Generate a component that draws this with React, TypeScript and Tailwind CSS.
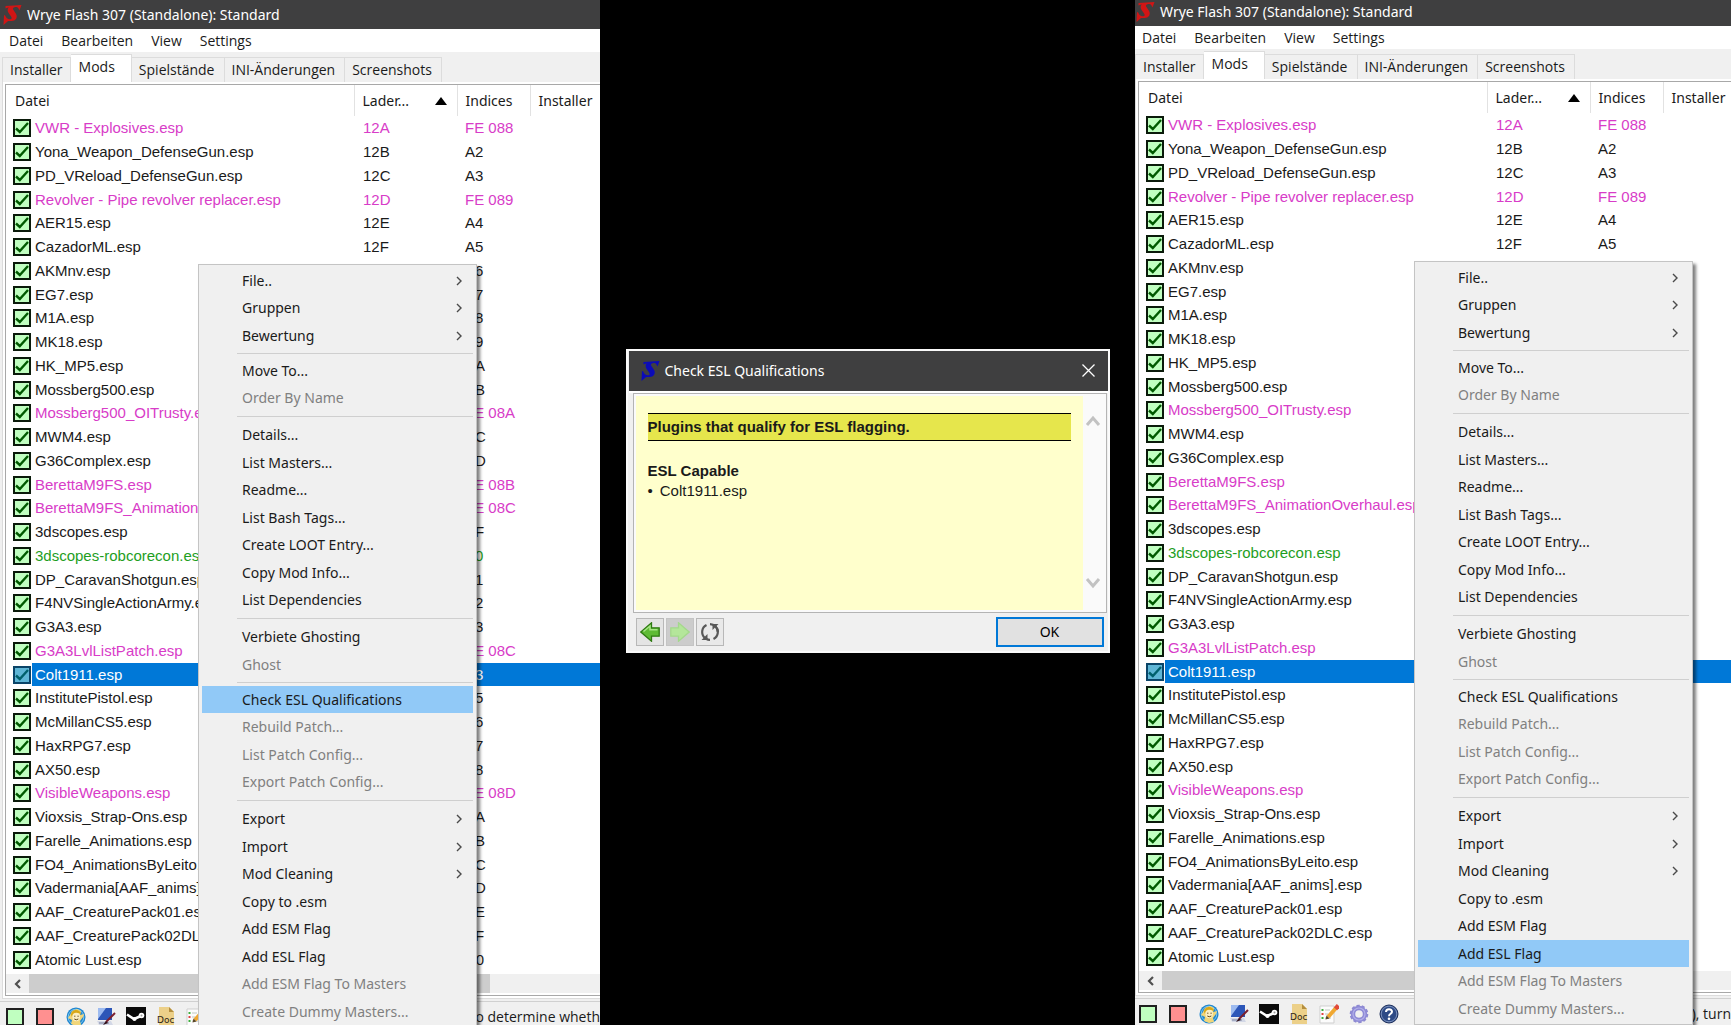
import React, { useState } from 'react';
import clsx from 'clsx';

type Tone = 'esl' | 'merge' | 'normal';

interface Mod {
  name: string;
  order?: string;
  index: string;
  tone?: Tone;
}

const MODS: Mod[] = [
  { name: 'VWR - Explosives.esp', order: '12A', index: 'FE 088', tone: 'esl' },
  { name: 'Yona_Weapon_DefenseGun.esp', order: '12B', index: 'A2' },
  { name: 'PD_VReload_DefenseGun.esp', order: '12C', index: 'A3' },
  { name: 'Revolver - Pipe revolver replacer.esp', order: '12D', index: 'FE 089', tone: 'esl' },
  { name: 'AER15.esp', order: '12E', index: 'A4' },
  { name: 'CazadorML.esp', order: '12F', index: 'A5' },
  { name: 'AKMnv.esp', index: 'A6' },
  { name: 'EG7.esp', index: 'A7' },
  { name: 'M1A.esp', index: 'A8' },
  { name: 'MK18.esp', index: 'A9' },
  { name: 'HK_MP5.esp', index: 'AA' },
  { name: 'Mossberg500.esp', index: 'AB' },
  { name: 'Mossberg500_OITrusty.esp', index: 'FE 08A', tone: 'esl' },
  { name: 'MWM4.esp', index: 'AC' },
  { name: 'G36Complex.esp', index: 'AD' },
  { name: 'BerettaM9FS.esp', index: 'FE 08B', tone: 'esl' },
  { name: 'BerettaM9FS_AnimationOverhaul.esp', index: 'FE 08C', tone: 'esl' },
  { name: '3dscopes.esp', index: 'AF' },
  { name: '3dscopes-robcorecon.esp', index: 'B0', tone: 'merge' },
  { name: 'DP_CaravanShotgun.esp', index: 'B1' },
  { name: 'F4NVSingleActionArmy.esp', index: 'B2' },
  { name: 'G3A3.esp', index: 'B3' },
  { name: 'G3A3LvlListPatch.esp', index: 'FE 08C', tone: 'esl' },
  { name: 'Colt1911.esp', index: 'B3' },
  { name: 'InstitutePistol.esp', index: 'B5' },
  { name: 'McMillanCS5.esp', index: 'B6' },
  { name: 'HaxRPG7.esp', index: 'B7' },
  { name: 'AX50.esp', index: 'B8' },
  { name: 'VisibleWeapons.esp', index: 'FE 08D', tone: 'esl' },
  { name: 'Vioxsis_Strap-Ons.esp', index: 'BA' },
  { name: 'Farelle_Animations.esp', index: 'BB' },
  { name: 'FO4_AnimationsByLeito.esp', index: 'BC' },
  { name: 'Vadermania[AAF_anims].esp', index: 'BD' },
  { name: 'AAF_CreaturePack01.esp', index: 'BE' },
  { name: 'AAF_CreaturePack02DLC.esp', index: 'BF' },
  { name: 'Atomic Lust.esp', index: 'C0' },
];

const SELECTED = 'Colt1911.esp';

interface MenuEntry {
  label: string;
  disabled?: boolean;
  submenu?: boolean;
}

// null is a separator
const MENU: (MenuEntry | null)[] = [
  { label: 'File..', submenu: true },
  { label: 'Gruppen', submenu: true },
  { label: 'Bewertung', submenu: true },
  null,
  { label: 'Move To...' },
  { label: 'Order By Name', disabled: true },
  null,
  { label: 'Details...' },
  { label: 'List Masters...' },
  { label: 'Readme...' },
  { label: 'List Bash Tags...' },
  { label: 'Create LOOT Entry...' },
  { label: 'Copy Mod Info...' },
  { label: 'List Dependencies' },
  null,
  { label: 'Verbiete Ghosting' },
  { label: 'Ghost', disabled: true },
  null,
  { label: 'Check ESL Qualifications' },
  { label: 'Rebuild Patch...', disabled: true },
  { label: 'List Patch Config...', disabled: true },
  { label: 'Export Patch Config...', disabled: true },
  null,
  { label: 'Export', submenu: true },
  { label: 'Import', submenu: true },
  { label: 'Mod Cleaning', submenu: true },
  { label: 'Copy to .esm' },
  { label: 'Add ESM Flag' },
  { label: 'Add ESL Flag' },
  { label: 'Add ESM Flag To Masters', disabled: true },
  { label: 'Create Dummy Masters...', disabled: true },
];

function Logo({ className }: { className?: string }) {
  return (
    <svg viewBox="0 0 19 20" className={clsx('h-5 w-[19px] shrink-0', className)} fill="currentColor" aria-hidden="true">
      <path d="M2.500 1 L18.500 0 L16.500 5.500 L15.500 3.500 C14.500 1.900 13 1.900 11.500 2.200 C9.600 2.600 9.600 4 10.600 5.300 L12.800 8.500 C14.800 11.500 13.600 15 10 15.800 C8 16.300 6 15.800 4.800 16.200 L0.500 20 L1 10 L2.200 10.500 C3 13 5 14.600 7.300 14.300 C8.900 14 9 12.500 7.900 11.200 L5.600 8 C4.300 6.200 4.300 4 5.800 2.300 L2.500 3.600 Z" />
    </svg>
  );
}

function Check({ selected }: { selected: boolean }) {
  return (
    <svg
      viewBox="0 0 18 18"
      className={clsx('pointer-events-none col-start-1 row-start-1 size-[18px]', selected ? 'text-[#00606c]' : 'text-[#005a00]')}
      fill="none"
      stroke="currentColor"
      aria-hidden="true"
    >
      <path d="M3 9.500 L6.800 13 L15 4" strokeWidth="2.400" />
    </svg>
  );
}

function ModRow({ mod }: { mod: Mod }) {
  const [active, setActive] = useState(true);
  const selected = mod.name === SELECTED;
  const color = selected
    ? 'bg-[#0078d7] text-white'
    : mod.tone === 'esl'
      ? 'text-[#d83cc8]'
      : mod.tone === 'merge'
        ? 'text-[#1e9e1e]'
        : 'text-[#1a1a1a]';

  return (
    <tr className="h-6 nth-[4n]:h-[23px]">
      <td className="h-[inherit] p-0">
        <label className="flex h-[inherit] items-center pl-[7px]">
          <span className="grid shrink-0">
            <input
              type="checkbox"
              checked={active}
              onChange={() => setActive(!active)}
              className={clsx(
                'col-start-1 row-start-1 size-[18px] appearance-none border-2',
                selected ? 'border-[#0a4468] bg-[#5fb6d6]' : 'border-[#0a1a0a] bg-[#c0ffc0]',
              )}
            />
            {active && <Check selected={selected} />}
          </span>
          <span className={clsx('ml-px flex h-[inherit] flex-1 items-center pl-[3px] whitespace-nowrap', color)}>{mod.name}</span>
        </label>
      </td>
      <td className={clsx('p-0 pl-[9px]', color)}>{mod.order}</td>
      <td className={clsx('p-0 pl-2', color)}>{mod.index}</td>
      <td className={clsx('p-0', color)} />
    </tr>
  );
}

function ModTable() {
  return (
    <table className="w-full table-fixed border-collapse font-['Liberation_Sans',sans-serif] text-[15px] leading-5">
      <colgroup>
        <col className="w-[348px]" />
        <col className="w-[103px]" />
        <col className="w-[73px]" />
        <col />
      </colgroup>
      <thead className="font-['Noto_Sans',sans-serif] text-sm text-[#1a1a1a]">
        <tr className="h-[31px]">
          <th className="border-r border-[#e2e2e2] p-0 pl-[9px] text-left font-normal">Datei</th>
          <th className="border-r border-[#e2e2e2] p-0 px-2 text-left font-normal">
            <span className="flex items-center justify-between">
              Lader...
              <svg viewBox="0 0 12 8" className="mr-[2px] h-2 w-3" aria-hidden="true">
                <path d="M6 0 L12 8 H0 Z" fill="#000" />
              </svg>
            </span>
          </th>
          <th className="border-r border-[#e2e2e2] p-0 pl-2 text-left font-normal">Indices</th>
          <th className="overflow-hidden p-0 pl-2 text-left font-normal">Installer</th>
        </tr>
      </thead>
      <tbody>
        {MODS.map((mod) => (
          <ModRow key={mod.name} mod={mod} />
        ))}
      </tbody>
    </table>
  );
}

function ContextMenu({ active, className }: { active: string; className?: string }) {
  return (
    <ul
      role="menu"
      className={clsx(
        'absolute z-10 w-[279px] border border-[#c4c4c4] bg-[#f0f0f0] px-[3px] py-[2px] text-sm leading-5 shadow-[3px_3px_3px_rgba(0,0,0,0.5)]',
        className,
      )}
    >
      {MENU.map((entry, i) =>
        entry === null ? (
          <li key={i} role="separator" className="flex h-[9px] items-center pl-[35px] even:h-2">
            <span className="h-px flex-1 bg-[#cfcfcf]" />
          </li>
        ) : (
          <li key={entry.label} role="none" className="h-[27px] even:h-7">
            <button
              type="button"
              role="menuitem"
              disabled={entry.disabled}
              className={clsx(
                'flex size-full items-center justify-between pr-[11px] pl-10 text-left',
                entry.disabled ? 'text-[#808080]' : 'text-[#1a1a1a]',
                entry.label === active && 'bg-[#91c9f7]',
              )}
            >
              {entry.label}
              {entry.submenu && (
                <svg viewBox="0 0 6 10" className="h-[10px] w-[6px]" fill="none" stroke="#4a4a4a" strokeWidth="1.400" aria-hidden="true">
                  <path d="M1 1 L5 5 L1 9" />
                </svg>
              )}
            </button>
          </li>
        ),
      )}
    </ul>
  );
}

function VaultBoyIcon() {
  return (
    <svg viewBox="0 0 20 20" className="size-5" aria-hidden="true">
      <circle cx="10" cy="10" r="9.500" fill="#1f86cf" />
      <circle cx="10" cy="10" r="7.800" fill="none" stroke="#7cc4ee" strokeWidth="1" />
      <path d="M2 11 L4 8 L6 4 L11 2 L15 4 L14 8 L18 7 L17 10 L14 14 L15 18 L10 19 L5 17 L6 13 Z" fill="#f1d67a" />
      <path d="M5 8 C5 2 14 1 15 7 L12 6 L9 8 L7 7 L6 10 Z" fill="#d9a818" />
      <ellipse cx="10.200" cy="10" rx="3.800" ry="4.200" fill="#fbeec4" />
      <path d="M8.200 9.200 h1.200 M11.500 9.200 h1.200 M8.300 12 q2 1.500 4 0" stroke="#5a4313" strokeWidth="1" fill="none" />
    </svg>
  );
}

function EditorIcon() {
  return (
    <svg viewBox="0 0 20 20" className="size-5" aria-hidden="true">
      <rect x="2" y="1" width="14" height="12" fill="#2c56b8" />
      <path d="M2 1 H10 L2 12 Z" fill="#9dbbf0" />
      <path d="M1 14 H15 L17 18 H3 Z" fill="#d3d8e6" />
      <path d="M3 16 H13" stroke="#7a82a0" />
      <path d="M19 6 L10 15" stroke="#7b1f2e" strokeWidth="2" />
      <path d="M10 14 L7 18 L12 16 Z" fill="#301018" />
    </svg>
  );
}

function SteamIcon() {
  return (
    <svg viewBox="0 0 20 20" className="size-5" aria-hidden="true">
      <rect width="20" height="20" fill="#0a0a0a" />
      <path d="M1 7.500 L8 12 L15 9" stroke="#fff" strokeWidth="2.600" fill="none" />
      <circle cx="15.500" cy="8.500" r="2.800" fill="#fff" />
      <circle cx="15.500" cy="8.500" r="1" fill="#9a9a9a" />
      <circle cx="8.500" cy="12" r="2" fill="#fff" />
    </svg>
  );
}

function DocIcon() {
  return (
    <svg viewBox="0 0 20 20" className="size-5" aria-hidden="true">
      <path d="M3 0 H13 L18 5 V20 H3 Z" fill="#ecd089" />
      <path d="M13 0 L18 5 H13 Z" fill="#b48e3e" />
      <text x="1" y="16" fontSize="9" fontFamily="DejaVu Sans, sans-serif" fill="#2b2412">
        Doc
      </text>
    </svg>
  );
}

function ChecklistIcon() {
  return (
    <svg viewBox="0 0 20 20" className="size-5" aria-hidden="true">
      <path d="M1 2 H15 V19 H1 Z" fill="#fcfcfc" stroke="#cfcfcf" />
      <path d="M3.500 5 v2 M3.500 13 v2" stroke="#3cae3c" strokeWidth="2" />
      <path d="M3.500 9 v2" stroke="#e04040" strokeWidth="2" />
      <path d="M6 6 H11 M6 10 H9 M6 14 H12" stroke="#c0c8c0" />
      <path d="M17 4 L9 13" stroke="#f0a832" strokeWidth="4" />
      <path d="M19.500 1.500 L16.500 4.800" stroke="#e04a3a" strokeWidth="4.500" />
      <path d="M7.500 11.500 L6.500 15.500 L10.500 14.500 Z" fill="#5a4628" />
    </svg>
  );
}

function GearIcon() {
  return (
    <svg viewBox="0 0 20 20" className="size-5" fill="none" aria-hidden="true">
      <circle cx="10" cy="10" r="8.300" stroke="#8d89d0" strokeWidth="2" strokeDasharray="3.200 2" />
      <circle cx="10" cy="10" r="6" stroke="#8f8bd6" strokeWidth="4.400" />
      <circle cx="10" cy="10" r="6" stroke="#b3b0ea" strokeWidth="1.200" />
    </svg>
  );
}

function HelpIcon() {
  return (
    <svg viewBox="0 0 20 20" className="size-5" fill="none" aria-hidden="true">
      <circle cx="10" cy="10" r="9" fill="#2d4a86" stroke="#1d2f5c" />
      <circle cx="10" cy="10" r="7.800" stroke="#8fa3cc" strokeWidth="0.800" />
      <path d="M7 8 C7 4.300 13 4.300 13 7.800 C13 9.800 10 9.800 10 12.200" stroke="#fff" strokeWidth="2" />
      <circle cx="10" cy="14.800" r="1.300" fill="#fff" />
    </svg>
  );
}

const LAUNCHERS: { label: string; icon: React.ReactNode }[] = [
  { label: 'Script Extender', icon: <span className="block size-[18px] border-2 border-[#202020] bg-[#c0ffc0]" /> },
  { label: 'Auto-Quit', icon: <span className="block size-[18px] border-2 border-[#202020] bg-[#ff9090]" /> },
  { label: 'Fallout 4', icon: <VaultBoyIcon /> },
  { label: 'Creation Kit', icon: <EditorIcon /> },
  { label: 'Steam', icon: <SteamIcon /> },
  { label: 'Doc Browser', icon: <DocIcon /> },
  { label: 'Mod Checker', icon: <ChecklistIcon /> },
  { label: 'Settings', icon: <GearIcon /> },
  { label: 'Help', icon: <HelpIcon /> },
];

const TABS = ['Installer', 'Mods', 'Spielstände', 'INI-Änderungen', 'Screenshots'];

const tabClass = (tab: string) => {
  if (tab === 'Mods') return 'h-[28px] bg-white pr-4 pb-1 pl-2';
  if (tab === 'Installer') return 'h-[25px] border-l px-[7px]';
  return 'h-[25px] pr-[9px] pl-[7px]';
};

interface BashWindowProps {
  activeEntry: string;
  status: string;
  menuClass: string;
  className?: string;
}

function BashWindow({ activeEntry, status, menuClass, className }: BashWindowProps) {
  return (
    <div className={clsx('relative bg-[#f0f0f0] text-sm leading-5 text-[#1a1a1a]', className)}>
      <header className="flex h-[29px] items-center gap-[5px] bg-[#3f3f40] pl-[3px] text-white">
        <Logo className="text-[#d01515]" />
        <h1>Wrye Flash 307 (Standalone): Standard</h1>
      </header>
      <nav className="flex h-[23px] items-center gap-[18px] bg-white pl-[9px] font-['Open_Sans',sans-serif]">
        {['Datei', 'Bearbeiten', 'View', 'Settings'].map((item) => (
          <button key={item} type="button">
            {item}
          </button>
        ))}
      </nav>
      <div role="tablist" className="flex h-[30px] items-end pl-[2px] font-['Open_Sans',sans-serif]">
        {TABS.map((tab) => (
          <button
            key={tab}
            type="button"
            role="tab"
            aria-selected={tab === 'Mods'}
            className={clsx('border-t border-r border-[#dcdcdc]', tabClass(tab))}
          >
            {tab}
          </button>
        ))}
      </div>
      <div className="ml-[2px] border-b border-l border-[#dcdcdc] bg-white pt-[2px] pb-[2px] pl-[2px]">
        <div className="border border-r-0 border-[#a8a8a8]">
          <ModTable />
          <div className="mt-[3px] flex h-[19px] bg-[#f0f0f0]">
            <button type="button" aria-label="Scroll left" className="flex w-[23px] items-center justify-center">
              <svg viewBox="0 0 7 10" className="h-[10px] w-[7px]" fill="none" stroke="#505050" strokeWidth="2.200" aria-hidden="true">
                <path d="M6 1 L2 5 L6 9" />
              </svg>
            </button>
            <div className="w-[461px] bg-[#cdcdcd]" />
          </div>
          <div className="h-[2px]" />
        </div>
      </div>
      <footer className="mt-[2px] flex items-start justify-between border-t border-[#d0d0d0] pt-[5px] pl-[6px]">
        <div className="flex shrink-0 gap-[10px]">
          {LAUNCHERS.map((item) => (
            <button key={item.label} type="button" aria-label={item.label} className="size-5">
              {item.icon}
            </button>
          ))}
        </div>
        <p className="font-['Open_Sans',sans-serif] whitespace-nowrap">{status}</p>
      </footer>
      <ContextMenu active={activeEntry} className={menuClass} />
    </div>
  );
}

function ArrowIcon({ faded }: { faded?: boolean }) {
  return (
    <svg viewBox="0 0 20 20" className={clsx('size-5', faded && '-scale-x-100')} aria-hidden="true">
      <path
        d="M0.800 10 L11.500 0.800 V5.800 H19.200 V14.200 H11.500 V19.200 Z"
        fill={faded ? '#b4e69a' : '#5fbb35'}
        stroke={faded ? '#a4d88c' : '#2f7a12'}
        strokeWidth="1.300"
      />
      {!faded && <path d="M3.500 9.500 L10 4 V7.800 H17.500" fill="none" stroke="#a6e486" strokeWidth="1.500" />}
    </svg>
  );
}

function RefreshIcon() {
  return (
    <svg viewBox="0 0 20 20" className="size-5" fill="none" stroke="#585858" strokeWidth="2.200" aria-hidden="true">
      <path d="M5 16 A7.800 7.800 0 0 1 6.500 3" />
      <path d="M10 2.200 A7.800 7.800 0 0 1 17.800 10" />
      <path d="M15 4 A7.800 7.800 0 0 1 13.500 17" />
      <path d="M10 17.800 A7.800 7.800 0 0 1 6 16.700" />
      <path d="M1.500 18 H7.500 V12 Z" fill="#585858" stroke="none" />
      <path d="M18.500 2 H12.500 V8 Z" fill="#585858" stroke="none" />
    </svg>
  );
}

function ScrollArrow({ down }: { down?: boolean }) {
  return (
    <button type="button" aria-label={down ? 'Scroll down' : 'Scroll up'}>
      <svg viewBox="0 0 16 12" className={clsx('h-3 w-4', down && 'rotate-180')} fill="none" stroke="#c2c2c2" strokeWidth="3" aria-hidden="true">
        <path d="M2 10 L8 3 L14 10" />
      </svg>
    </button>
  );
}

function EslDialog() {
  return (
    <div role="dialog" aria-labelledby="esl-title" className="w-full max-w-[484px] border-2 border-[#fafafa] bg-[#f0f0f0] pl-px text-sm leading-5">
      <header className="flex h-10 items-center bg-[#3f3f40] pr-[13px] pl-3 text-white">
        <Logo className="text-[#0b0bb8]" />
        <h2 id="esl-title" className="ml-[5px] flex-1">
          Check ESL Qualifications
        </h2>
        <button type="button" aria-label="Close">
          <svg viewBox="0 0 13 13" className="size-[13px]" stroke="#fff" strokeWidth="1.300" aria-hidden="true">
            <path d="M0.500 0.500 L12.500 12.500 M12.500 0.500 L0.500 12.500" />
          </svg>
        </button>
      </header>
      <div className="border-t-2 border-white pr-px pl-[4px]">
        <div className="flex h-[220px] border border-[#b4b4b4] bg-[#fafafa] p-[2px] font-['Liberation_Sans',sans-serif] text-[15px]">
          <div className="flex-1 bg-[#ffffcc] px-3 pt-[17px] text-[#1a1a1a]">
            <h3 className="border-y border-black bg-[#e6e64c] py-[2px] leading-[22px] font-bold">Plugins that qualify for ESL flagging.</h3>
            <h4 className="mt-5 font-bold">ESL Capable</h4>
            <p className="flex gap-[7px]">
              <span>•</span>Colt1911.esp
            </p>
          </div>
          <div className="flex w-[21px] flex-col items-center justify-between pt-[19px] pb-[21px]">
            <ScrollArrow />
            <ScrollArrow down />
          </div>
        </div>
        <div className="flex items-center justify-between py-1 pr-[3px] pl-[3px]">
          <div className="flex gap-[2px]">
            <button type="button" aria-label="Back" className="flex size-7 items-center justify-center border border-[#b8b8b8] bg-[#e4e4e4]">
              <ArrowIcon />
            </button>
            <button type="button" aria-label="Forward" disabled className="flex size-7 items-center justify-center border border-[#c4c4c4] bg-[#cccccc]">
              <ArrowIcon faded />
            </button>
            <button type="button" aria-label="Refresh" className="flex size-7 items-center justify-center border border-[#b8b8b8] bg-[#e9e9e9]">
              <RefreshIcon />
            </button>
          </div>
          <button type="button" className="h-[30px] w-[108px] border-2 border-[#0078d7] bg-[#e1e1e1]">
            OK
          </button>
        </div>
      </div>
    </div>
  );
}

export default function App() {
  return (
    <main className="grid h-screen grid-cols-[600fr_535fr_596fr] overflow-hidden bg-black font-['Noto_Sans',sans-serif]">
      <section className="overflow-hidden bg-[#f0f0f0]">
        <BashWindow activeEntry="Check ESL Qualifications" status="to determine wheth" menuClass="top-[264px] left-[198px]" />
      </section>
      <section className="flex items-center justify-center pb-6">
        <EslDialog />
      </section>
      <section className="overflow-hidden bg-[#f0f0f0]">
        <BashWindow
          activeEntry="Add ESL Flag"
          status="), turn"
          menuClass="top-[264px] left-[281px]"
          className="-mt-[3px] -ml-[2px]"
        />
      </section>
    </main>
  );
}
